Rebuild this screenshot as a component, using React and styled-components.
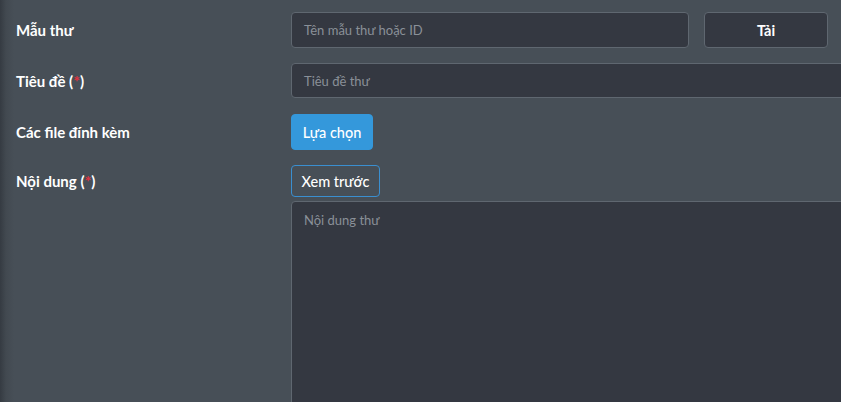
import styled, { createGlobalStyle } from "styled-components"

const GlobalStyle = createGlobalStyle`
    html, body{
        margin: 0;
        padding: 0;
        overflow: hidden;
    }
    body{
        background: #474f57;
        font-family: Lato, "Noto Sans", sans-serif;
    }
`

const Page = styled.div`
    width: 841px;
    height: 402px;
    overflow: hidden;
    box-sizing: border-box;
    padding: 12px 0 0 16px;
    background: linear-gradient(to right, #353b42 0, #424950 6px, #474f57 14px);
`

const Row = styled.div`
    display: grid;
    grid-template-columns: 275px 620px;
    align-items: ${p => p.$top ? "start" : "center"};
    margin-bottom: ${p => p.$gap || 15}px;
`

const Label = styled.div`
    color: #ffffff;
    font-size: 15px;
    font-weight: 700;
    line-height: 20px;
    padding-top: ${p => p.$top ? 6 : 0}px;
    span{
        color: #e0313f;
        font-size: 16px;
    }
`

const Field = styled.div`
    display: flex;
    flex-direction: column;
    gap: ${p => p.$stack ? 4 : 0}px;
    align-items: flex-start;
`

const Inline = styled.div`
    display: flex;
    gap: 15px;
`

const Input = styled.div`
    box-sizing: border-box;
    width: ${p => p.$width || "100%"};
    height: ${p => p.$height || 36}px;
    background: #343841;
    border: 1px solid #5f6770;
    border-radius: 4px;
    padding: ${p => p.$area ? "8px 12px" : "0 12px"};
    display: flex;
    align-items: ${p => p.$area ? "flex-start" : "center"};
    color: #8a9098;
    font-size: 13px;
    line-height: 20px;
`

const Button = styled.div`
    box-sizing: border-box;
    height: ${p => p.$height || 36}px;
    width: ${p => p.$width}px;
    display: flex;
    align-items: center;
    justify-content: center;
    white-space: nowrap;
    padding: 0;
    border-radius: 4px;
    font-size: 14.5px;
    color: #ffffff;
    font-weight: ${p => p.$bold ? 700 : 500};
    background: ${p => p.$variant === "primary" ? "#3498db" : p.$variant === "outline" ? "transparent" : "#343841"};
    border: 1px solid ${p => p.$variant === "primary" ? "#3498db" : p.$variant === "outline" ? "#3a8fd0" : "#5f6770"};
`

export default function App() {
    return (
        <>
            <GlobalStyle />
            <Page>
                <Row>
                    <Label>Mẫu thư</Label>
                    <Inline>
                        <Input $width="398px">Tên mẫu thư hoặc ID</Input>
                        <Button $width={124} $bold>Tải</Button>
                    </Inline>
                </Row>
                <Row $gap={16}>
                    <Label>Tiêu đề (<span>*</span>)</Label>
                    <Input $height={35}>Tiêu đề thư</Input>
                </Row>
                <Row>
                    <Label>Các file đính kèm</Label>
                    <Field>
                        <Button $variant="primary" $width={82}>Lựa chọn</Button>
                    </Field>
                </Row>
                <Row $top>
                    <Label $top>Nội dung (<span>*</span>)</Label>
                    <Field $stack>
                        <Button $variant="outline" $width={89} $height={32}>Xem trước</Button>
                        <Input $area $height={260}>Nội dung thư</Input>
                    </Field>
                </Row>
            </Page>
        </>
    )
}
